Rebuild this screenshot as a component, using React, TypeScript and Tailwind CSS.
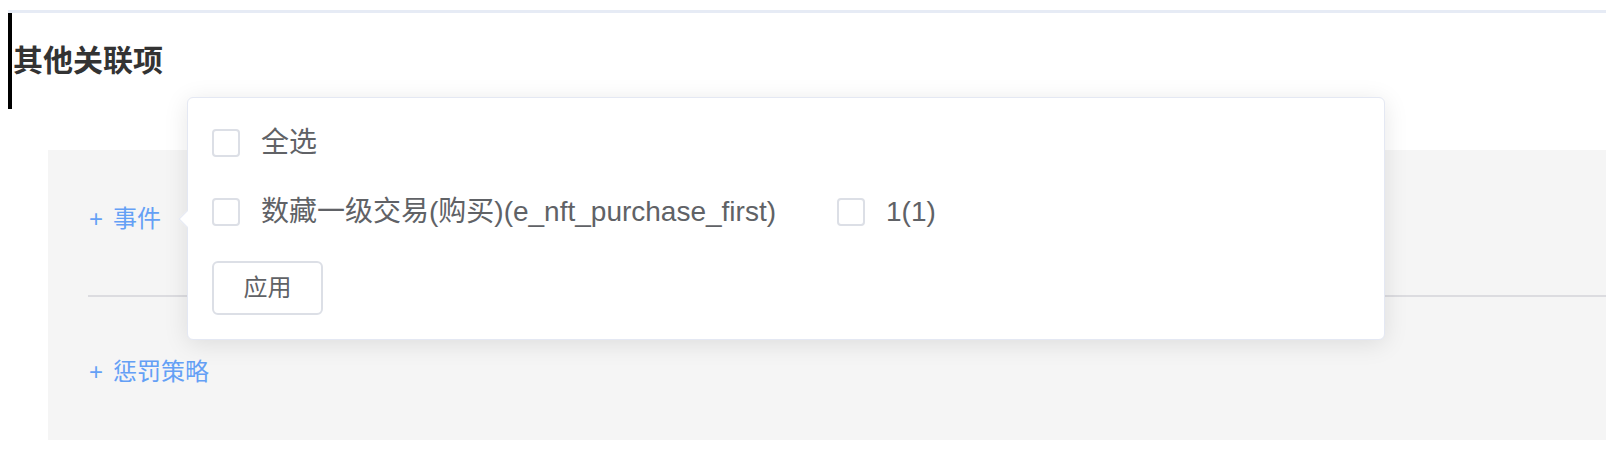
import React from "react";

const font = {
  fontFamily: '"Liberation Sans", "Noto Sans CJK SC", sans-serif',
};

const Checkbox = () => (
  <span className="inline-block w-[28px] h-[28px] shrink-0 rounded-[4px] border-2 border-[#dcdfe6] bg-white" />
);

const AddLink = ({ label }: { label: string }) => (
  <div className="pl-[41px] text-[24px] leading-[28px] text-[#64a0f5]">
    <span className="mr-[10px]">+</span>
    {label}
  </div>
);

const RelatedPanel = () => {
  return (
    <div className="relative w-full h-[470px] bg-white pt-[10px] pl-[8px]" style={font}>
      <div className="h-[3px] bg-[#e6ebf5]" />
      <div className="h-[96px] border-l-4 border-black flex items-center pl-[1px]">
        <span className="text-[30px] leading-[36px] font-semibold text-[#333333]">其他关联项</span>
      </div>

      <div className="mt-[41px] ml-[40px] h-[290px] bg-[#f5f5f5] pt-[55px]">
        <AddLink label="事件" />
        <div className="mt-[62px] ml-[40px] h-[2px] bg-[#dcdce0]" />
        <div className="mt-[61px]">
          <AddLink label="惩罚策略" />
        </div>
      </div>

      {/* popover */}
      <div className="absolute left-[187px] top-[97px] w-[1198px] h-[243px] rounded-[6px] border border-[#e4e8f3] bg-white shadow-[0_4px_24px_rgba(0,0,0,0.1)] pl-[24px] pt-[31px]">
        <div className="absolute left-[-7px] top-[115px] w-[12px] h-[12px] rotate-45 bg-white border-l border-b border-[#e4e8f3]" />
        <div className="relative flex flex-col text-[28px] leading-[28px] text-[#606266]">
          <label className="flex items-center gap-[21px] h-[28px]">
            <Checkbox />
            <span>全选</span>
          </label>
          <div className="flex items-center h-[28px] mt-[41px]">
            <label className="flex items-center gap-[21px] mr-[61px]">
              <Checkbox />
              <span>数藏一级交易(购买)(e_nft_purchase_first)</span>
            </label>
            <label className="flex items-center gap-[21px]">
              <Checkbox />
              <span>1(1)</span>
            </label>
          </div>
          <button className="mt-[35px] w-[111px] h-[54px] rounded-[6px] border-2 border-[#dcdfe6] bg-white text-[24px] text-[#606266]">
            应用
          </button>
        </div>
      </div>
    </div>
  );
};

export default function App() {
  return <RelatedPanel />;
}
